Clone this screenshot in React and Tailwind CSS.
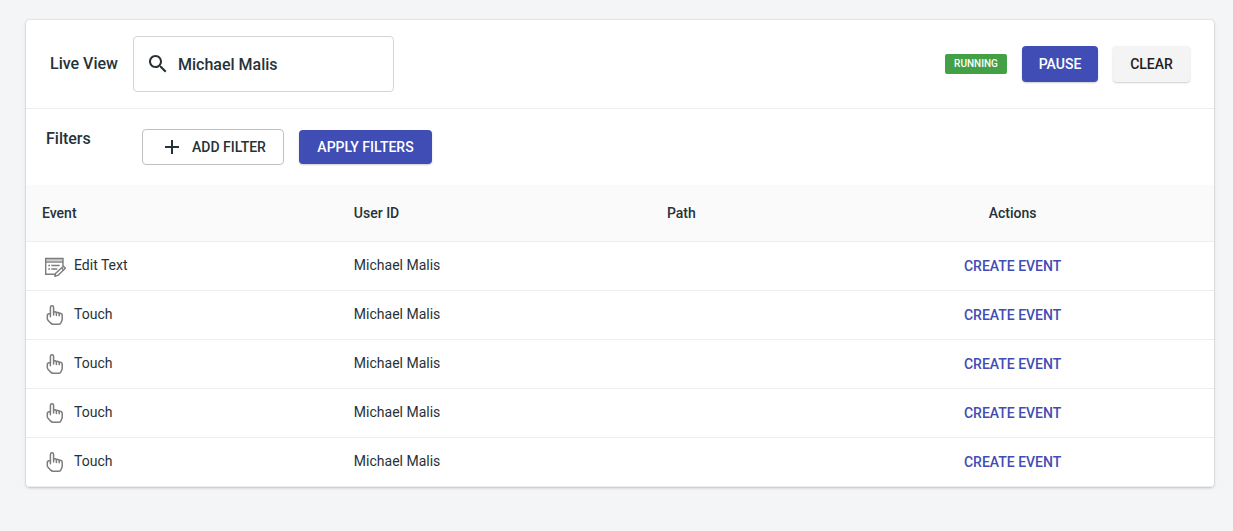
const events = [
  { type: 'Edit Text', user: 'Michael Malis', path: '' },
  { type: 'Touch', user: 'Michael Malis', path: '' },
  { type: 'Touch', user: 'Michael Malis', path: '' },
  { type: 'Touch', user: 'Michael Malis', path: '' },
  { type: 'Touch', user: 'Michael Malis', path: '' },
];

function SearchIcon() {
  return (
    <svg className="h-6 w-6 shrink-0" viewBox="0 0 24 24" fill="currentColor" aria-hidden="true">
      <path d="M15.5 14h-.79l-.28-.27C15.41 12.59 16 11.11 16 9.5 16 5.91 13.09 3 9.5 3S3 5.91 3 9.5 5.91 16 9.5 16c1.61 0 3.09-.59 4.23-1.57l.27.28v.79l5 4.99L20.49 19l-4.99-5zm-6 0C7.01 14 5 11.99 5 9.5S7.01 5 9.5 5 14 7.01 14 9.5 11.99 14 9.5 14z" />
    </svg>
  );
}

function PlusIcon() {
  return (
    <svg className="h-6 w-6 shrink-0" viewBox="0 0 24 24" fill="currentColor" aria-hidden="true">
      <path d="M19 13h-6v6h-2v-6H5v-2h6V5h2v6h6v2z" />
    </svg>
  );
}

function EditTextIcon() {
  return (
    <svg className="h-6 w-6 shrink-0" viewBox="0 0 24 24" fill="none" stroke="#7c7c7c" strokeWidth="1.4" aria-hidden="true">
      <path d="M4.300 5.500h16.400" strokeWidth="3" stroke="#d0d0d0" />
      <path d="M13 20.300H3.700V4.500h17.300v7.500" />
      <path d="M3.700 8h17.300" />
      <path d="M6.300 11.500h1.700M9.300 11.500h8.400M6.300 15h1.700M9.300 15h6" />
      <path d="M21.400 12.200l2 2-7.600 7.200-3 .9.900-3z" fill="#fff" strokeLinejoin="round" />
      <path d="M19.600 13.900l2 2" />
    </svg>
  );
}

function TouchIcon() {
  return (
    <svg className="h-6 w-6 shrink-0" viewBox="0 0 24 24" fill="none" stroke="#7c7c7c" strokeWidth="1.5" strokeLinecap="round" strokeLinejoin="round" aria-hidden="true">
      <path d="M8.400 13.800V4.400c0-2.200 3.200-2.200 3.200 0v4.900c.5-.9 2.500-.8 2.800.4.600-.6 2.500-.4 2.800.7.900-.4 3 0 3 1.700v4.200c0 1.600-1 2.300-1.300 3.500-.3 1-1.100 1.400-2 1.400h-5.900c-1.300 0-1.900-.7-2.700-1.500l-2.100-2.200c-.7-.7-.9-1.300-.9-2.300v-2.500c0-1.500 1.500-2.100 3.100-2.100" />
      <path d="M11.600 9.300v2.700M14.400 9.900v2.500M17.200 10.400v2.300" />
    </svg>
  );
}

function Button({ className, children }) {
  return (
    <button type="button" className={`inline-flex items-center justify-center rounded text-sm leading-6 font-medium uppercase ${className}`}>
      {children}
    </button>
  );
}

export default function App() {
  return (
    <div className="min-h-screen bg-[#f4f5f7] pt-5 pr-[19px] pb-11 pl-[26px] font-['Roboto',sans-serif] text-[#263238]">
      <main className="overflow-hidden rounded bg-white shadow-[0_0_0_1px_rgba(63,63,68,0.05),0_1px_3px_0_rgba(63,63,68,0.25)]">
        <header className="flex items-center justify-between border-b border-[#eeeeee] px-6 py-4">
          <div className="flex items-center gap-[15px]">
            <h1 className="text-base font-medium">Live View</h1>
            <label className="flex h-14 w-[261px] items-center gap-2 rounded border border-[#d5d5d5] px-3">
              <SearchIcon />
              <input
                type="text"
                aria-label="Search users"
                defaultValue="Michael Malis"
                className="w-full min-w-0 bg-transparent pt-0.5 text-base font-medium outline-none"
              />
            </label>
          </div>
          <div className="flex items-center gap-[15px]">
            <span className="min-w-[62px] rounded-xs bg-[#43a047] px-2 text-center text-[10px] leading-5 font-medium text-white">RUNNING</span>
            <Button className="min-w-[76px] bg-[#3f4db5] px-4 py-1.5 text-white shadow-[0_1px_2px_rgba(0,0,0,0.2)]">Pause</Button>
            <Button className="min-w-[77px] bg-[#f4f4f4] px-4 py-1.5 text-[#212121] shadow-[0_1px_2px_rgba(0,0,0,0.2)]">Clear</Button>
          </div>
        </header>

        <section className="flex items-start px-5 py-5">
          <h2 className="w-24 text-base leading-5 font-medium">Filters</h2>
          <div className="flex items-center gap-[15px]">
            <Button className="h-9 min-w-[142px] gap-2 border border-[#c0c0c0] px-[15px]">
              <PlusIcon />
              Add Filter
            </Button>
            <Button className="h-[34px] min-w-[133px] bg-[#3f4db5] px-4 text-white shadow-[0_1px_2px_rgba(0,0,0,0.2)]">Apply Filters</Button>
          </div>
        </section>

        <table className="w-full table-fixed border-collapse text-left text-sm">
          <colgroup>
            <col className="w-[26.25%]" />
            <col className="w-[26.35%]" />
            <col className="w-[13.5%]" />
            <col />
          </colgroup>
          <thead className="bg-[#fafafa]">
            <tr className="h-14 border-b border-[#eeeeee]">
              <th className="px-4 font-medium">Event</th>
              <th className="px-4 font-medium">User ID</th>
              <th className="px-4 font-medium">Path</th>
              <th className="px-4 text-center font-medium">Actions</th>
            </tr>
          </thead>
          <tbody>
            {events.map((event, index) => (
              <tr key={index} className="h-[49px] border-b border-[#eeeeee]">
                <td className="px-4">
                  <div className="flex items-center gap-2">
                    {event.type === 'Touch' ? <TouchIcon /> : <EditTextIcon />}
                    <span className="pb-0.5">{event.type}</span>
                  </div>
                </td>
                <td className="px-4 pb-0.5">{event.user}</td>
                <td className="px-4 pb-0.5">{event.path}</td>
                <td className="px-4 text-center">
                  <Button className="px-2 py-1 text-[#3f4db5]">Create Event</Button>
                </td>
              </tr>
            ))}
          </tbody>
        </table>
      </main>
    </div>
  );
}
